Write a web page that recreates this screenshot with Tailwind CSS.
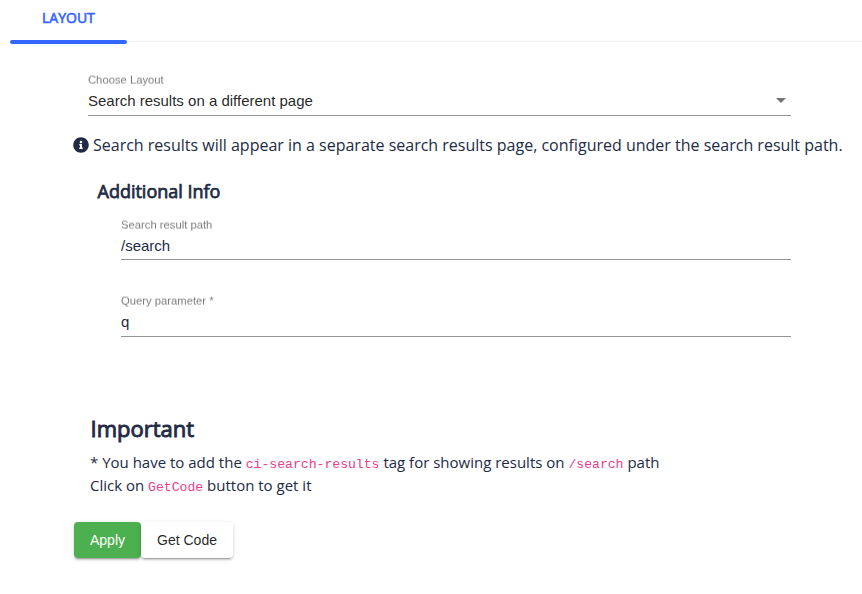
<!DOCTYPE html>
<html lang="en">

<head>
    <meta charset="UTF-8">
    <meta name="viewport" content="width=device-width, initial-scale=1.0">
    <title>Layout</title>
    <script src="https://cdn.jsdelivr.net/npm/@tailwindcss/browser@4"></script>
</head>

<body class="bg-white text-[#222b45] font-['Open_Sans',sans-serif]">

    <nav class="flex pl-[10px] h-11">
        <div class="w-[117px] flex flex-col justify-between">
            <span class="pl-8 pt-[6px] text-sm leading-6 text-[#3366ff] [-webkit-text-stroke:0.6px_#3366ff]">LAYOUT</span>
            <span class="h-1 rounded-full bg-[#3366ff]"></span>
        </div>
        <div class="flex-1 h-[42px] border-b border-[#edf1f7]"></div>
    </nav>

    <main>
        <!-- layout select -->
        <div class="ml-[88px] mt-7 w-[703px] h-11 border-b border-[#949494] font-['Liberation_Sans',sans-serif]">
            <label class="block h-4 text-[15px] leading-5 origin-top-left [transform:perspective(100px)_translateZ(0.001px)_translateY(0.6px)_scale(0.75)] text-black/54">Choose Layout</label>
            <div class="flex justify-between items-center pr-[5px] mt-1 text-[15px] leading-[18px] text-black/87">
                <span>Search results on a different page</span>
                <span class="mb-px border-x-5 border-t-5 border-x-transparent border-t-black/54"></span>
            </div>
        </div>

        <p class="flex items-center pl-[73px] mt-[17px] text-base leading-6 whitespace-nowrap">
            <svg class="w-4 h-4 mr-1" viewBox="0 0 512 512" fill="currentColor">
                <path d="M256 8C119 8 8 119.100 8 256c0 137 111 248 248 248s248-111 248-248C504 119.100 393 8 256 8zm0 110c23.200 0 42 18.800 42 42s-18.800 42-42 42-42-18.800-42-42 18.800-42 42-42zm56 254c0 6.600-5.400 12-12 12h-88c-6.600 0-12-5.400-12-12v-24c0-6.600 5.400-12 12-12h12v-64h-12c-6.600 0-12-5.400-12-12v-24c0-6.600 5.400-12 12-12h64c6.600 0 12 5.400 12 12v100h12c6.600 0 12 5.400 12 12v24z" />
            </svg>
            <span>Search results will appear in a separate search results page, configured under the search result path.</span>
        </p>

        <section class="pl-[97px]">
            <h6 class="pl-[0.5px] mt-[22px] text-lg leading-6 [-webkit-text-stroke:0.75px_#222b45]">Additional Info</h6>

            <div class="ml-6 mt-[14px] w-[670px] h-[43px] border-b border-[#949494] font-['Liberation_Sans',sans-serif]">
                <label class="block h-4 text-[15px] leading-5 origin-top-left [transform:perspective(100px)_translateZ(0.001px)_translateY(0.6px)_scale(0.75)] text-black/54">Search result path</label>
                <div class="mt-1 text-[15px] leading-[18px]">/search</div>
            </div>

            <div class="ml-6 mt-[33px] w-[670px] h-11 border-b border-[#949494] font-['Liberation_Sans',sans-serif]">
                <label class="block h-4 text-[15px] leading-5 origin-top-left [transform:perspective(100px)_translateZ(0.001px)_translateY(0.6px)_scale(0.75)] text-black/54">Query parameter *</label>
                <div class="mt-1 text-[15px] leading-[18px]">q</div>
            </div>
        </section>

        <section class="pl-[90px] mt-[75px]">
            <h5 class="pl-[0.5px] text-[22px] leading-8 [-webkit-text-stroke:0.9px_#222b45]">Important</h5>
            <p class="mt-[7px] text-[15px] leading-[23px]">
                * You have to add the <code class="font-['Liberation_Mono',monospace] text-[13.125px] leading-none text-[#e83e8c]">ci-search-results</code> tag for showing results on <code class="font-['Liberation_Mono',monospace] text-[13.125px] leading-none text-[#e83e8c]">/search</code> path<br>
                Click on <code class="font-['Liberation_Mono',monospace] text-[13.125px] leading-none text-[#e83e8c]">GetCode</code> button to get it
            </p>
        </section>

        <div class="flex pl-[74px] mt-[25px] pb-9 text-sm font-['Liberation_Sans',sans-serif]">
            <button class="h-9 w-[67px] rounded bg-[#4caf50] text-white shadow-[0_3px_1px_-2px_rgba(0,0,0,0.2),0_2px_2px_0_rgba(0,0,0,0.14),0_1px_5px_0_rgba(0,0,0,0.12)]">Apply</button>
            <button class="h-9 w-[92px] rounded bg-white text-black/87 shadow-[0_3px_1px_-2px_rgba(0,0,0,0.2),0_2px_2px_0_rgba(0,0,0,0.14),0_1px_5px_0_rgba(0,0,0,0.12)]">Get Code</button>
        </div>
    </main>

</body>

</html>
